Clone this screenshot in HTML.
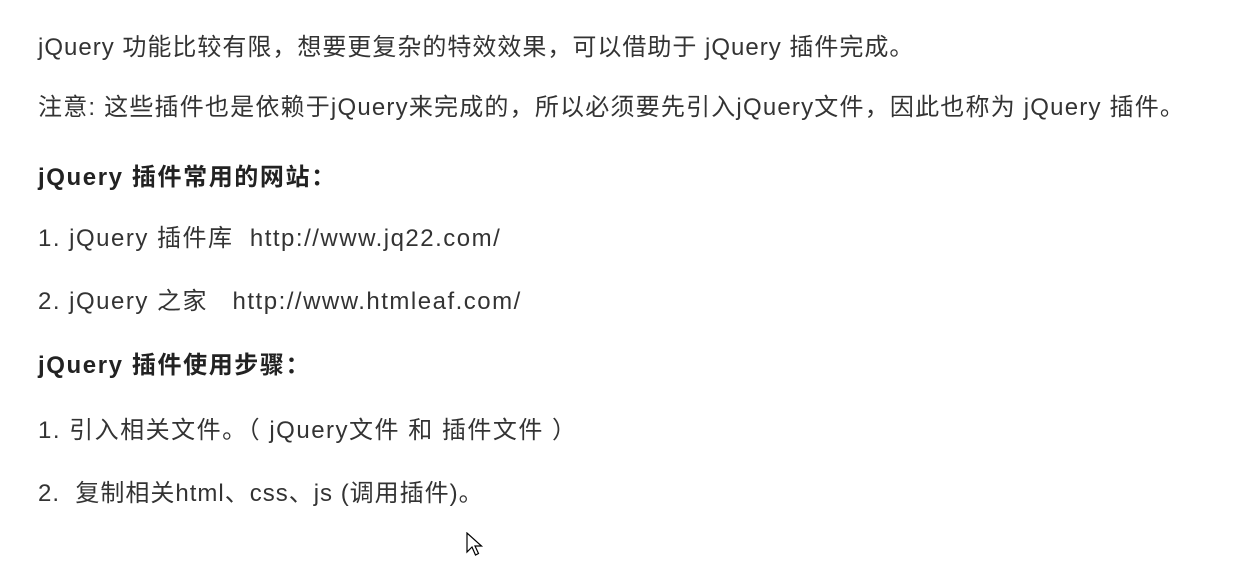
<!DOCTYPE html>
<html><head><meta charset="utf-8"><style>
body{margin:0;width:1243px;height:576px;background:#fff;overflow:hidden;font-family:"Liberation Sans","Noto Sans CJK SC",sans-serif;color:#333;font-size:24px;letter-spacing:1px;}
.l{position:absolute;left:38px;white-space:pre;line-height:30px;}
.w{letter-spacing:1.5px}
b{font-weight:bold;color:#222;letter-spacing:1.6px}
</style></head><body>
<div class="l" style="top:33px">jQuery 功能比较有限，想要更复杂的特效效果，可以借助于 jQuery 插件完成。</div>
<div class="l" style="top:93px;letter-spacing:1.2px">注意: 这些插件也是依赖于jQuery来完成的，所以必须要先引入jQuery文件，因此也称为 jQuery 插件。</div>
<div class="l" style="top:163px"><b>jQuery 插件常用的网站：</b></div>
<div class="l w" style="top:224px">1. jQuery 插件库  http://www.jq22.com/</div>
<div class="l w" style="top:287px">2. jQuery 之家   http://www.htmleaf.com/</div>
<div class="l" style="top:351px"><b>jQuery 插件使用步骤：</b></div>
<div class="l w" style="top:416px">1. 引入相关文件。（ jQuery文件 和 插件文件 ）</div>
<div class="l" style="top:479px">2.  复制相关html、css、js (调用插件)。</div>
<svg style="position:absolute;left:466px;top:532px" width="18" height="26" viewBox="0 0 18 26"><path d="M1 1 L1 20 L6 15 L9.5 23 L12.5 21.5 L9 14 L15.5 14 Z" fill="#fff" stroke="#000" stroke-width="1.2"/></svg>
</body></html>
